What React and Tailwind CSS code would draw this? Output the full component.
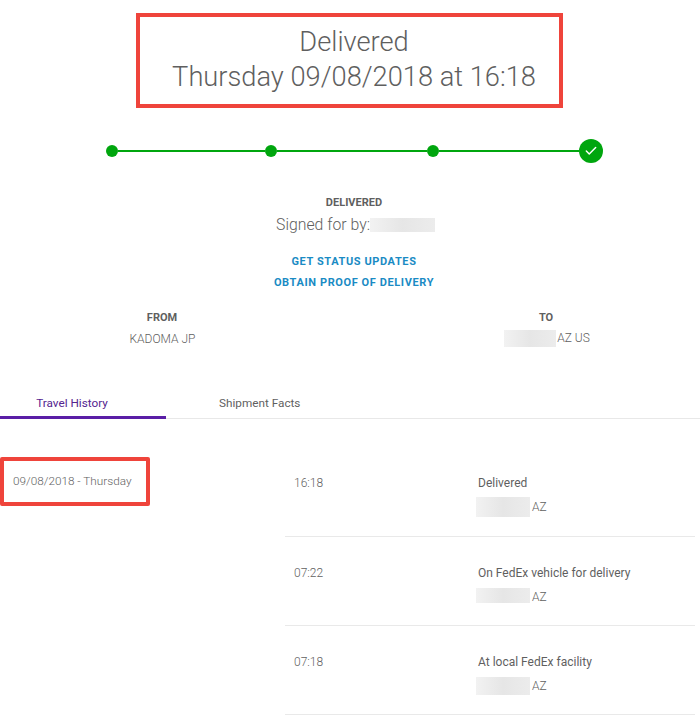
import { Check } from 'lucide-react'

const events = [
  { time: '16:18', label: 'Delivered', blurClass: 'h-[20px]' },
  { time: '07:22', label: 'On FedEx vehicle for delivery', blurClass: 'mb-[3px] h-[15px]' },
  { time: '07:18', label: 'At local FedEx facility', blurClass: 'h-[18px]' },
]

function Blur({ className }) {
  return <span className={`block bg-linear-to-r from-[#f2f2f2] via-[#e6e6e6] to-[#ececec] ${className}`} />
}

function Dot() {
  return <span className="h-[12px] w-[12px] shrink-0 rounded-full bg-[#00a60e]" />
}

function Line({ className }) {
  return <span className={`h-[2px] bg-[#00a60e] ${className}`} />
}

export default function App() {
  return (
    <div className="h-[715px] w-[700px] overflow-hidden bg-white font-['Roboto',sans-serif] text-[#5f5f5f]">
      <div className="ml-[136px] mt-[13px] flex h-[95px] w-[427px] flex-col items-center justify-center border-4 border-[#ef443b] pb-[2px] pl-[9px] text-[27.25px] font-light leading-[35px]">
        <div>Delivered</div>
        <div>Thursday 09/08/2018 at 16:18</div>
      </div>

      <div className="ml-[106px] mt-[31px] flex w-[497px] items-center">
        <Dot />
        <Line className="w-[147px]" />
        <Dot />
        <Line className="w-[150px]" />
        <Dot />
        <Line className="w-[140px]" />
        <span className="flex h-[24px] w-[24px] shrink-0 items-center justify-center rounded-full bg-[#00a60e] text-white">
          <Check size={14} strokeWidth={2.5} />
        </span>
      </div>

      <div className="mt-[33px] flex flex-col items-center pl-[8px]">
        <div className="text-[11px] font-bold leading-[14px]">DELIVERED</div>
        <div className="ml-[3px] mt-[5px] flex items-center text-[15.8px] font-light leading-[20px]">
          <span>Signed for by:</span>
          <Blur className="h-[14px] w-[65px]" />
        </div>
        <div className="mt-[20px] text-[11px] font-bold leading-[14px] tracking-[0.6px] text-[#1a8bc4]">GET STATUS UPDATES</div>
        <div className="mt-[7px] text-[11px] font-bold leading-[14px] tracking-[0.6px] text-[#1a8bc4]">OBTAIN PROOF OF DELIVERY</div>
      </div>

      <div className="mt-[21px] flex">
        <div className="ml-[62px] flex w-[200px] flex-col items-center">
          <div className="text-[11px] font-bold leading-[14px]">FROM</div>
          <div className="ml-[1px] mt-[7px] text-[12px] font-light leading-[14px]">KADOMA JP</div>
        </div>
        <div className="ml-[184px] flex w-[200px] flex-col items-center">
          <div className="text-[11px] font-bold leading-[14px]">TO</div>
          <div className="ml-[2px] mt-[5px] flex items-center text-[12px] font-light leading-[17px]">
            <Blur className="h-[17px] w-[52px]" />
            <span className="ml-[1px]">AZ US</span>
          </div>
        </div>
      </div>

      <div className="mt-[38px] flex h-[34px] border-b border-[#e8e8e8] text-[11.75px] leading-[14px]">
        <div className="-mb-px flex w-[166px] items-start justify-center border-b-[3px] border-[#5a1ea6] pr-[22px] pt-[11px] text-[#55248f]">
          Travel History
        </div>
        <div className="ml-[53px] pt-[11px]">Shipment Facts</div>
      </div>

      <div className="mt-[28px] flex">
        <div className="mt-[10px] flex h-[49px] w-[150px] shrink-0 items-center rounded-[2px] border-4 border-[#ef443b] pl-[9px] text-[11.75px] font-light">
          09/08/2018 - Thursday
        </div>
        <div className="ml-[135px] w-[410px]">
          {events.map((e) => (
            <div key={e.time} className="flex h-[89px] border-b border-[#e9e9e9] pt-[29px] text-[12px] first:h-[90px]">
              <div className="w-[193px] pl-[9px] font-light leading-[14px]">{e.time}</div>
              <div className="leading-[14px]">
                <div>{e.label}</div>
                <div className="-ml-[2px] mt-[7px] flex h-[20px] items-center font-light">
                  <Blur className={`w-[54px] ${e.blurClass}`} />
                  <span className="ml-[2px]">AZ</span>
                </div>
              </div>
            </div>
          ))}
        </div>
      </div>
    </div>
  )
}
